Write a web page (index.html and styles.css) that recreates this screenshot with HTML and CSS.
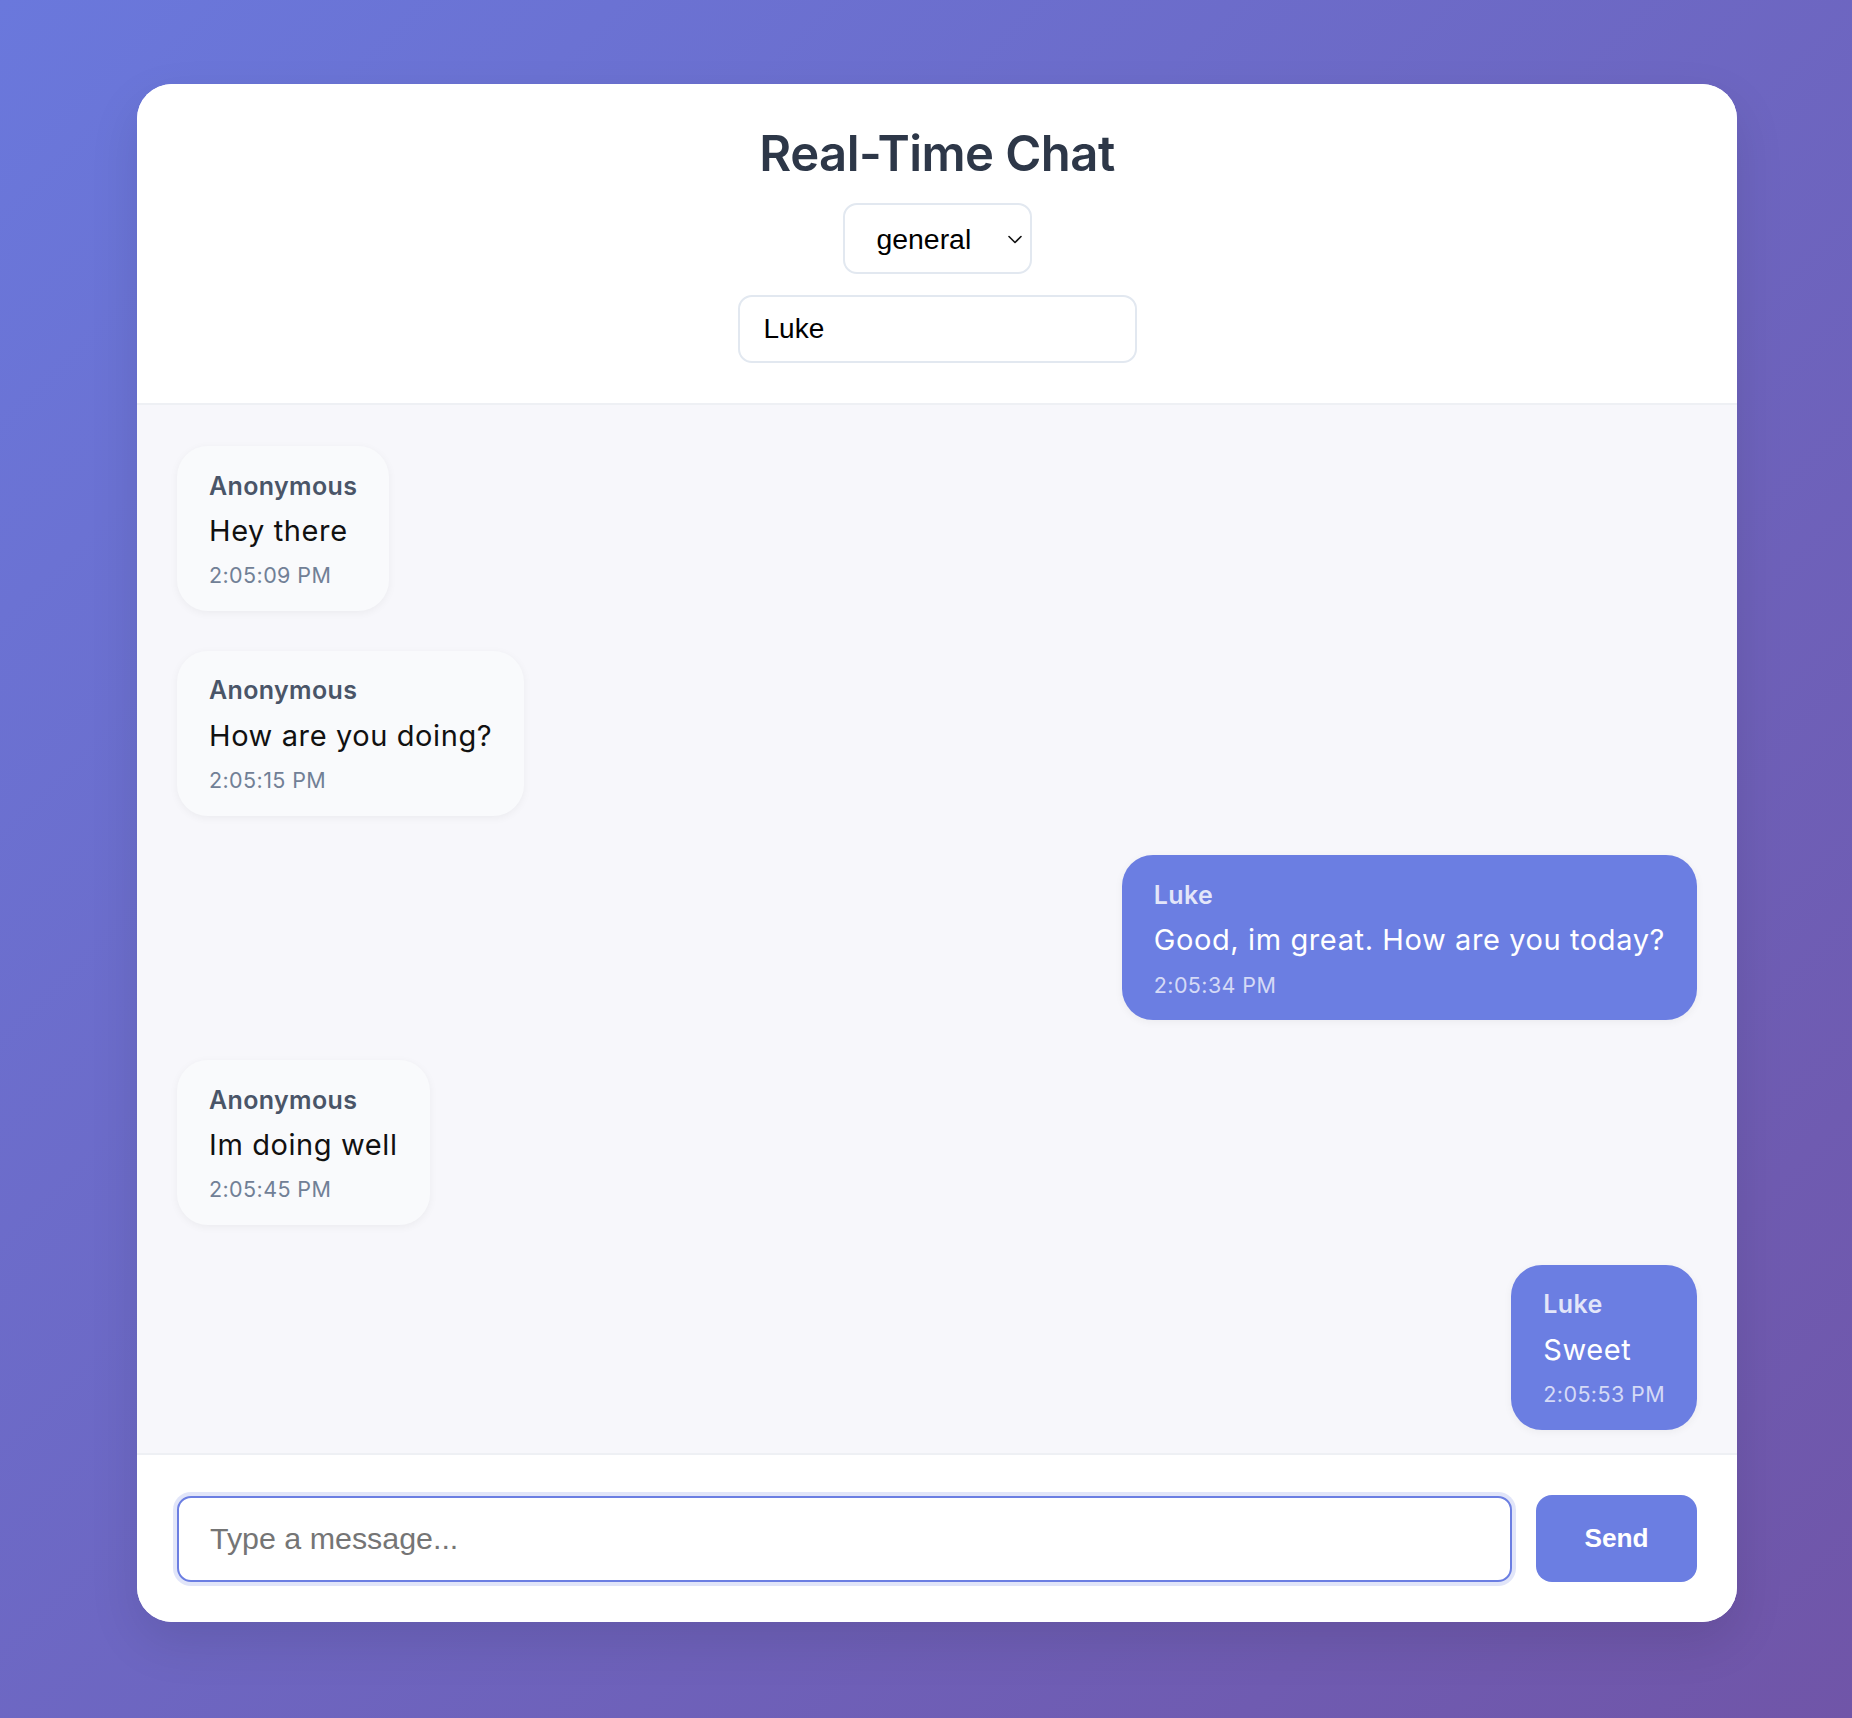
FILE: index.html
```html
<!DOCTYPE html>
<html lang="en">
<head>
<meta charset="utf-8">
<title>Real-Time Chat</title>
<link rel="stylesheet" href="styles.css">
</head>
<body>
<div class="page">
  <div class="chat-card">
    <header class="chat-header">
      <h1 class="chat-title">Real-Time Chat</h1>
      <div class="room-select-wrap">
        <select class="room-select">
          <option>general</option>
          <option>random</option>
        </select>
        <svg class="room-chevron" width="14" height="9" viewBox="0 0 14 9" aria-hidden="true"><polyline points="1,1.5 7,7.5 13,1.5" fill="none" stroke="#111" stroke-width="1.6" stroke-linecap="round" stroke-linejoin="round"/></svg>
      </div>
      <input class="name-input" type="text" value="Luke">
    </header>

    <main class="messages">
      <div class="message other">
        <div class="msg-name">Anonymous</div>
        <div class="msg-text">Hey there</div>
        <div class="msg-time">2:05:09 PM</div>
      </div>
      <div class="message other">
        <div class="msg-name">Anonymous</div>
        <div class="msg-text">How are you doing?</div>
        <div class="msg-time">2:05:15 PM</div>
      </div>
      <div class="message own">
        <div class="msg-name">Luke</div>
        <div class="msg-text">Good, im great. How are you today?</div>
        <div class="msg-time">2:05:34 PM</div>
      </div>
      <div class="message other">
        <div class="msg-name">Anonymous</div>
        <div class="msg-text">Im doing well</div>
        <div class="msg-time">2:05:45 PM</div>
      </div>
      <div class="message own">
        <div class="msg-name">Luke</div>
        <div class="msg-text">Sweet</div>
        <div class="msg-time">2:05:53 PM</div>
      </div>
    </main>

    <footer class="composer">
      <input class="message-input" type="text" placeholder="Type a message...">
      <button class="send-button" type="button">Send</button>
    </footer>
  </div>
</div>
</body>
</html>
```

FILE: styles.css
```css
* {
  box-sizing: border-box;
}

html, body {
  margin: 0;
  padding: 0;
}

body {
  width: 1852px;
  height: 1718px;
  overflow: hidden;
  background: linear-gradient(135deg, #6a78dc 0%, #7055a8 100%);
  font-family: Inter, "Noto Sans", "Liberation Sans", sans-serif;
}

.page {
  padding: 84px 0 0 137px;
}

.chat-card {
  width: 1600px;
  height: 1538px;
  background: #ffffff;
  border-radius: 35px;
  overflow: hidden;
  display: flex;
  flex-direction: column;
  box-shadow: 0 20px 50px rgba(0, 0, 0, 0.1);
}

.chat-header {
  flex: none;
  display: flex;
  flex-direction: column;
  align-items: center;
  padding: 40px 0 40px;
  border-bottom: 2px solid #eef0f4;
  background: #ffffff;
}

.chat-title {
  margin: 0 0 20px;
  font-size: 49px;
  line-height: 59px;
  font-weight: 600;
  color: #2d3748;
  letter-spacing: -0.55px;
}

.room-select-wrap {
  position: relative;
  width: 189px;
  height: 71px;
  margin-bottom: 21px;
}

.room-select {
  -webkit-appearance: none;
  appearance: none;
  width: 189px;
  height: 71px;
  padding: 0 0 0 32px;
  border: 2px solid #e2e8f0;
  border-radius: 14px;
  background: #ffffff;
  font-family: "Liberation Sans", Arial, sans-serif;
  font-size: 28.4px;
  color: #000000;
  outline: none;
}

.room-chevron {
  position: absolute;
  right: 10px;
  top: 32px;
  pointer-events: none;
}

.name-input {
  width: 399px;
  height: 68px;
  padding: 0 24px;
  border: 2px solid #e2e8f0;
  border-radius: 14px;
  font-family: "Liberation Sans", Arial, sans-serif;
  font-size: 28px;
  color: #000000;
  background: #ffffff;
  outline: none;
}

.messages {
  flex: 1;
  min-height: 0;
  overflow: hidden;
  background: #f7f7fb;
  padding: 41px 40px 42px;
  display: flex;
  flex-direction: column;
  gap: 39.6px;
}

.message {
  flex: none;
  max-width: 70%;
  padding: 24.5px 32px 22.8px;
  border-radius: 31px;
  box-shadow: 0 2px 8px rgba(0, 0, 0, 0.05);
}

.message.other {
  align-self: flex-start;
  background: #f9fafc;
}

.message.own {
  align-self: flex-end;
  background: #6b7ee2;
}

.msg-name {
  font-size: 25px;
  font-weight: 600;
  color: #4a5568;
  letter-spacing: 0.35px;
  margin-bottom: 12.5px;
}

.msg-text {
  font-size: 29px;
  color: #111111;
  letter-spacing: 0.6px;
  margin-bottom: 14.3px;
}

.msg-time {
  font-size: 21.5px;
  color: #718096;
  letter-spacing: 0.4px;
}

.message.own .msg-name {
  color: rgba(255, 255, 255, 0.82);
}

.message.own .msg-text {
  color: #ffffff;
}

.message.own .msg-time {
  color: rgba(255, 255, 255, 0.72);
}

.composer {
  flex: none;
  display: flex;
  align-items: center;
  gap: 24px;
  padding: 40px;
  border-top: 2px solid #eef0f4;
  background: #ffffff;
}

.message-input {
  flex: 1;
  height: 86px;
  padding: 0 31px;
  border: 2px solid #6b7ee2;
  border-radius: 14px;
  box-shadow: 0 0 0 4px rgba(107, 126, 226, 0.2);
  font-family: "Liberation Sans", Arial, sans-serif;
  font-size: 30.4px;
  color: #000000;
  outline: none;
}

.message-input::placeholder {
  color: #757575;
}

.send-button {
  flex: none;
  width: 161px;
  height: 87px;
  border: none;
  border-radius: 16px;
  background: #6b7ee2;
  color: #ffffff;
  font-family: "Liberation Sans", Arial, sans-serif;
  font-size: 26.25px;
  font-weight: 700;
  cursor: pointer;
}
```
